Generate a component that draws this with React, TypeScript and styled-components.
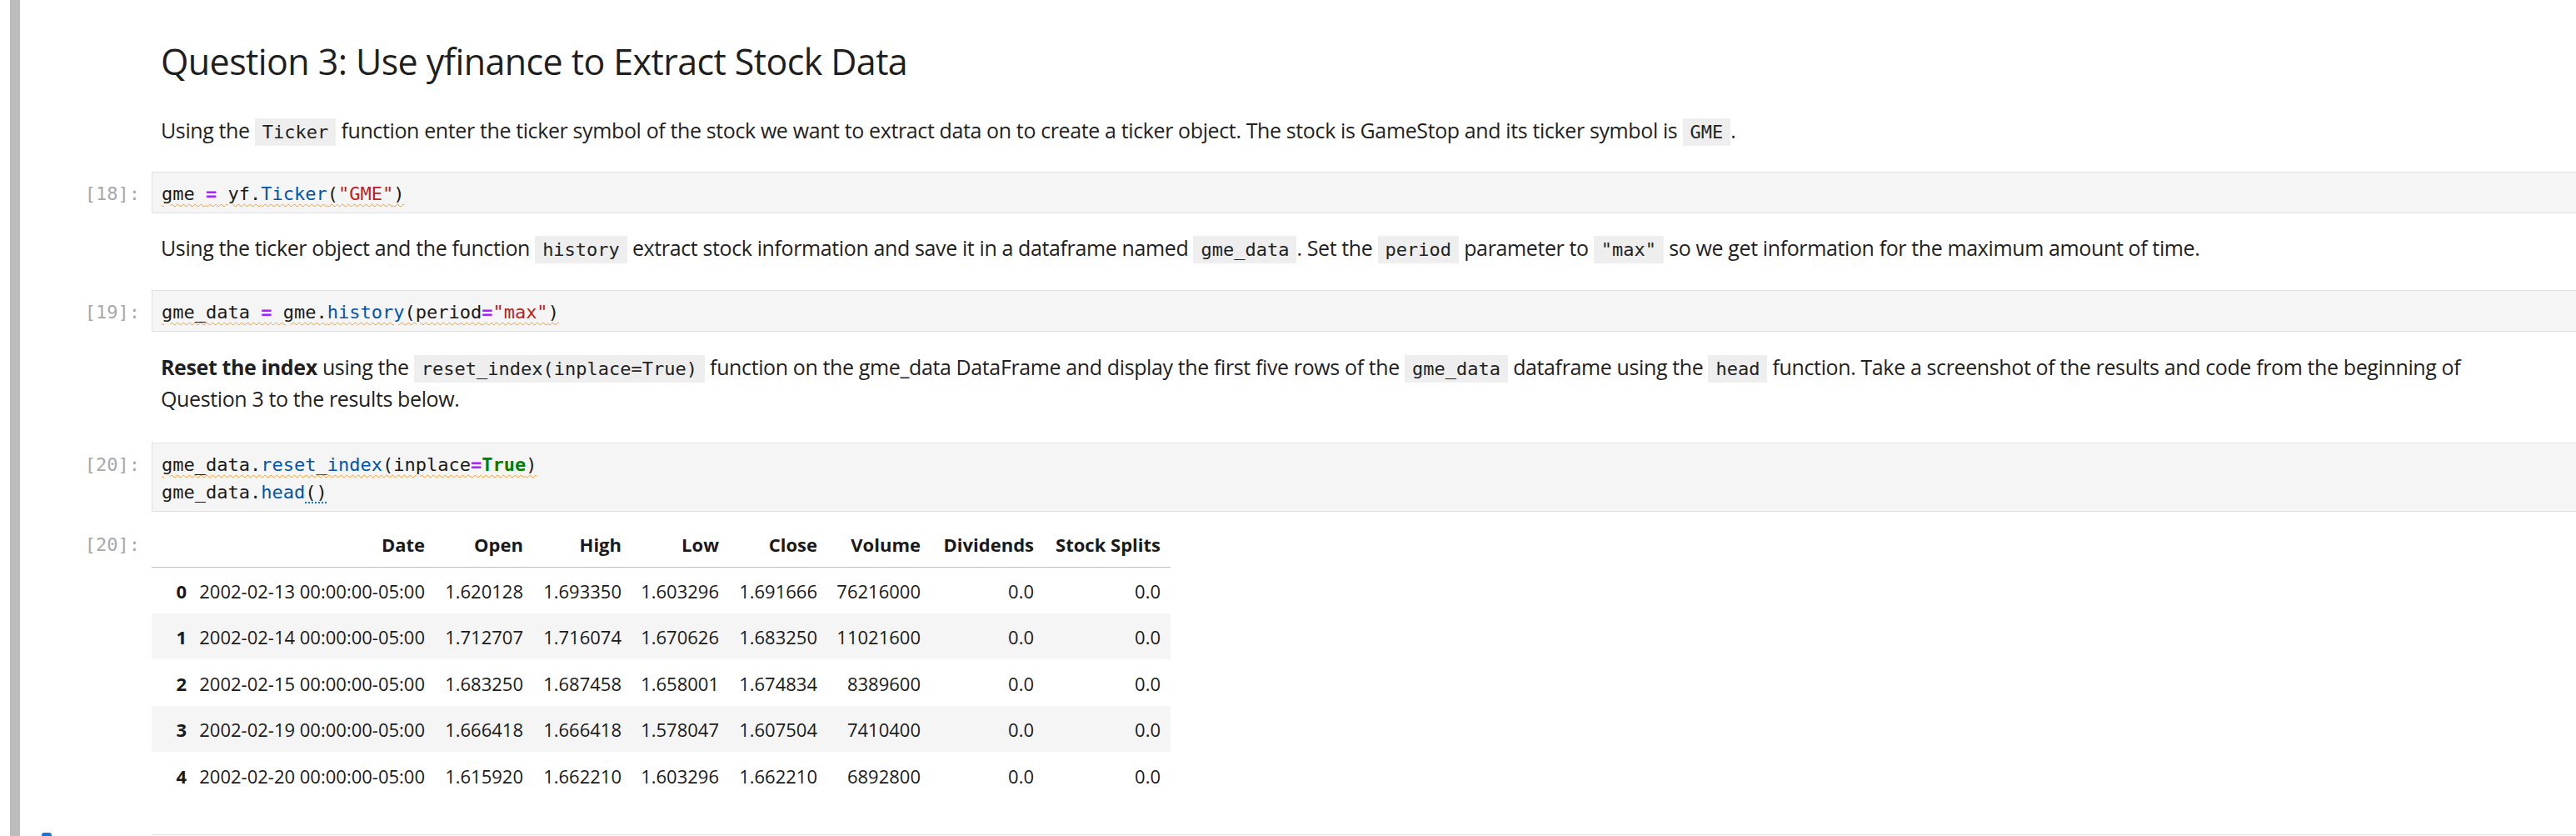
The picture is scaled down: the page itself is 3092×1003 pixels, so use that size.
import React from "react";
import styled, { createGlobalStyle } from "styled-components";

const GlobalStyle = createGlobalStyle`
  html, body {
    margin: 0;
    padding: 0;
    background: #fff;
  }
  body {
    font-family: "Open Sans", "Noto Sans", sans-serif;
    color: #1f1f1f;
  }
`;

type Row = {
  idx: number;
  date: string;
  open: string;
  high: string;
  low: string;
  close: string;
  volume: string;
  div: string;
  splits: string;
};

const rows: Row[] = [
  { idx: 0, date: "2002-02-13 00:00:00-05:00", open: "1.620128", high: "1.693350", low: "1.603296", close: "1.691666", volume: "76216000", div: "0.0", splits: "0.0" },
  { idx: 1, date: "2002-02-14 00:00:00-05:00", open: "1.712707", high: "1.716074", low: "1.670626", close: "1.683250", volume: "11021600", div: "0.0", splits: "0.0" },
  { idx: 2, date: "2002-02-15 00:00:00-05:00", open: "1.683250", high: "1.687458", low: "1.658001", close: "1.674834", volume: "8389600", div: "0.0", splits: "0.0" },
  { idx: 3, date: "2002-02-19 00:00:00-05:00", open: "1.666418", high: "1.666418", low: "1.578047", close: "1.607504", volume: "7410400", div: "0.0", splits: "0.0" },
  { idx: 4, date: "2002-02-20 00:00:00-05:00", open: "1.615920", high: "1.662210", low: "1.603296", close: "1.662210", volume: "6892800", div: "0.0", splits: "0.0" },
];

const columns = ["Date", "Open", "High", "Low", "Close", "Volume", "Dividends", "Stock Splits"];
const colWidths = [54, 286, 118, 118, 117, 118, 124, 136, 152];

export default function App() {
  return (
    <>
      <GlobalStyle />
      <SPage>
        <SCollapser />
        <SNotebook>
          <SCell $pt={44} $pb={31}>
            <SPrompt />
            <SMarkdown>
              <STitle>Question 3: Use yfinance to Extract Stock Data</STitle>
              <SPara>
                Using the <SInline>Ticker</SInline> function enter the ticker symbol of the stock we want to extract data on to create a ticker object. The stock is GameStop and its ticker symbol is <SInline>GME</SInline>.
              </SPara>
            </SMarkdown>
          </SCell>

          <SCell>
            <SPrompt $top={10}>[18]:</SPrompt>
            <SCode>
              <SLine $warn>
                gme <SOp>=</SOp> yf.<SFn>Ticker</SFn>(<SStr>"GME"</SStr>)
              </SLine>
            </SCode>
          </SCell>

          <SCell $pt={22} $pb={32}>
            <SPrompt />
            <SMarkdown>
              <SPara>
                Using the ticker object and the function <SInline>history</SInline> extract stock information and save it in a dataframe named <SInline>gme_data</SInline>. Set the <SInline>period</SInline> parameter to <SInline>"max"</SInline> so we get information for the maximum amount of time.
              </SPara>
            </SMarkdown>
          </SCell>

          <SCell>
            <SPrompt $top={10}>[19]:</SPrompt>
            <SCode>
              <SLine $warn>
                gme_data <SOp>=</SOp> gme.<SFn>history</SFn>(period<SOp>=</SOp><SStr>"max"</SStr>)
              </SLine>
            </SCode>
          </SCell>

          <SCell $pt={23} $pb={34}>
            <SPrompt />
            <SMarkdown>
              <SPara>
                <b>Reset the index</b> using the <SInline>reset_index(inplace=True)</SInline> function on the gme_data DataFrame and display the first five rows of the <SInline>gme_data</SInline> dataframe using the <SInline>head</SInline> function. Take a screenshot of the results and code from the beginning of Question 3 to the results below.
              </SPara>
            </SMarkdown>
          </SCell>

          <SCell>
            <SPrompt $top={10}>[20]:</SPrompt>
            <SCode>
              <SLine $warn>
                gme_data.<SFn>reset_index</SFn>(inplace<SOp>=</SOp><SKw>True</SKw>)
              </SLine>
              <SLine>
                gme_data.<SFn>head</SFn>
                <SHint>()</SHint>
              </SLine>
            </SCode>
          </SCell>

          <SCell $pt={10} $pb={43}>
            <SPrompt $top={13}>[20]:</SPrompt>
            <STable>
              <colgroup>
                {colWidths.map((w, i) => (
                  <col key={i} style={{ width: w }} />
                ))}
              </colgroup>
              <thead>
                <tr>
                  <th />
                  {columns.map((c) => (
                    <th key={c}>{c}</th>
                  ))}
                </tr>
              </thead>
              <tbody>
                {rows.map((r) => (
                  <tr key={r.idx}>
                    <th>{r.idx}</th>
                    <td>{r.date}</td>
                    <td>{r.open}</td>
                    <td>{r.high}</td>
                    <td>{r.low}</td>
                    <td>{r.close}</td>
                    <td>{r.volume}</td>
                    <td>{r.div}</td>
                    <td>{r.splits}</td>
                  </tr>
                ))}
              </tbody>
            </STable>
          </SCell>

          <SCell>
            <SPrompt>
              <SActiveMark />
            </SPrompt>
            <SNextCell />
          </SCell>
        </SNotebook>
      </SPage>
    </>
  );
}

const SPage = styled.div`
  display: flex;
  min-height: 1003px;
`;

const SCollapser = styled.div`
  flex: none;
  width: 12px;
  margin-left: 12px;
  background-color: #bdbdbd;
`;

const SNotebook = styled.div`
  flex: 1;
  min-width: 0;
  display: flex;
  flex-direction: column;
`;

const SCell = styled.div<{ $pt?: number; $pb?: number }>`
  display: flex;
  align-items: flex-start;
  padding: ${(p) => p.$pt ?? 0}px 0 ${(p) => p.$pb ?? 0}px;
`;

const SPrompt = styled.div<{ $top?: number }>`
  flex: none;
  position: relative;
  width: 158px;
  box-sizing: border-box;
  padding: ${(p) => p.$top ?? 0}px 14px 0 0;
  text-align: right;
  font-family: "DejaVu Sans Mono", "Liberation Mono", monospace;
  font-size: 22px;
  line-height: 33px;
  color: #a8a8a8;
`;

const SActiveMark = styled.div`
  position: absolute;
  left: 26px;
  top: -2px;
  width: 12px;
  height: 8px;
  border-radius: 3px;
  background-color: #1976d2;
`;

const SMarkdown = styled.div`
  flex: 1;
  min-width: 0;
  padding: 0 72px 0 11px;
`;

const STitle = styled.h2`
  margin: 0 0 33px 0;
  font-size: 43px;
  font-weight: 400;
  letter-spacing: -0.6px;
  line-height: 60px;
  color: #1f1f1f;
`;

const SPara = styled.p`
  margin: 0;
  font-size: 25px;
  letter-spacing: -0.38px;
  line-height: 38px;
  color: #1f1f1f;
`;

const SInline = styled.code`
  font-family: "DejaVu Sans Mono", "Liberation Mono", monospace;
  font-size: 22px;
  letter-spacing: 0;
  line-height: 24px;
  background-color: #eeeeee;
  padding: 4px 9px;
  color: #222;
`;

const SCode = styled.div`
  flex: 1;
  min-width: 0;
  background-color: #f5f5f5;
  border: 1px solid #e0e0e0;
  border-right: none;
  padding: 9px 11px 6px;
  font-family: "DejaVu Sans Mono", "Liberation Mono", monospace;
  font-size: 22px;
  line-height: 33px;
  color: #1a1a1a;
`;

const SLine = styled.div<{ $warn?: boolean }>`
  white-space: pre;
  ${(p) =>
    p.$warn &&
    `
    text-decoration: underline wavy #ff9a1f;
    text-decoration-thickness: 1px;
    text-underline-offset: 4px;
  `}
`;

const SHint = styled.span`
  text-decoration: underline dotted #1976d2;
  text-underline-offset: 4px;
`;

const SOp = styled.span`
  color: #aa22ff;
  font-weight: 700;
`;

const SFn = styled.span`
  color: #0055aa;
`;

const SStr = styled.span`
  color: #ba2121;
`;

const SKw = styled.span`
  color: #008000;
  font-weight: 700;
`;

const STable = styled.table`
  border-collapse: collapse;
  table-layout: fixed;
  width: 1223px;
  font-size: 22px;
  color: #1a1a1a;

  th,
  td {
    height: 55.5px;
    padding: 2px 12px 0 0;
    box-sizing: border-box;
    text-align: right;
    vertical-align: middle;
    white-space: nowrap;
    line-height: 30px;
  }

  th {
    font-weight: 700;
  }

  thead th {
    height: 56px;
    border-bottom: 1px solid #bdbdbd;
  }

  tbody tr:nth-child(even) {
    background-color: #f5f5f5;
  }
`;

const SNextCell = styled.div`
  flex: 1;
  height: 20px;
  border-top: 1px solid #e0e0e0;
`;
